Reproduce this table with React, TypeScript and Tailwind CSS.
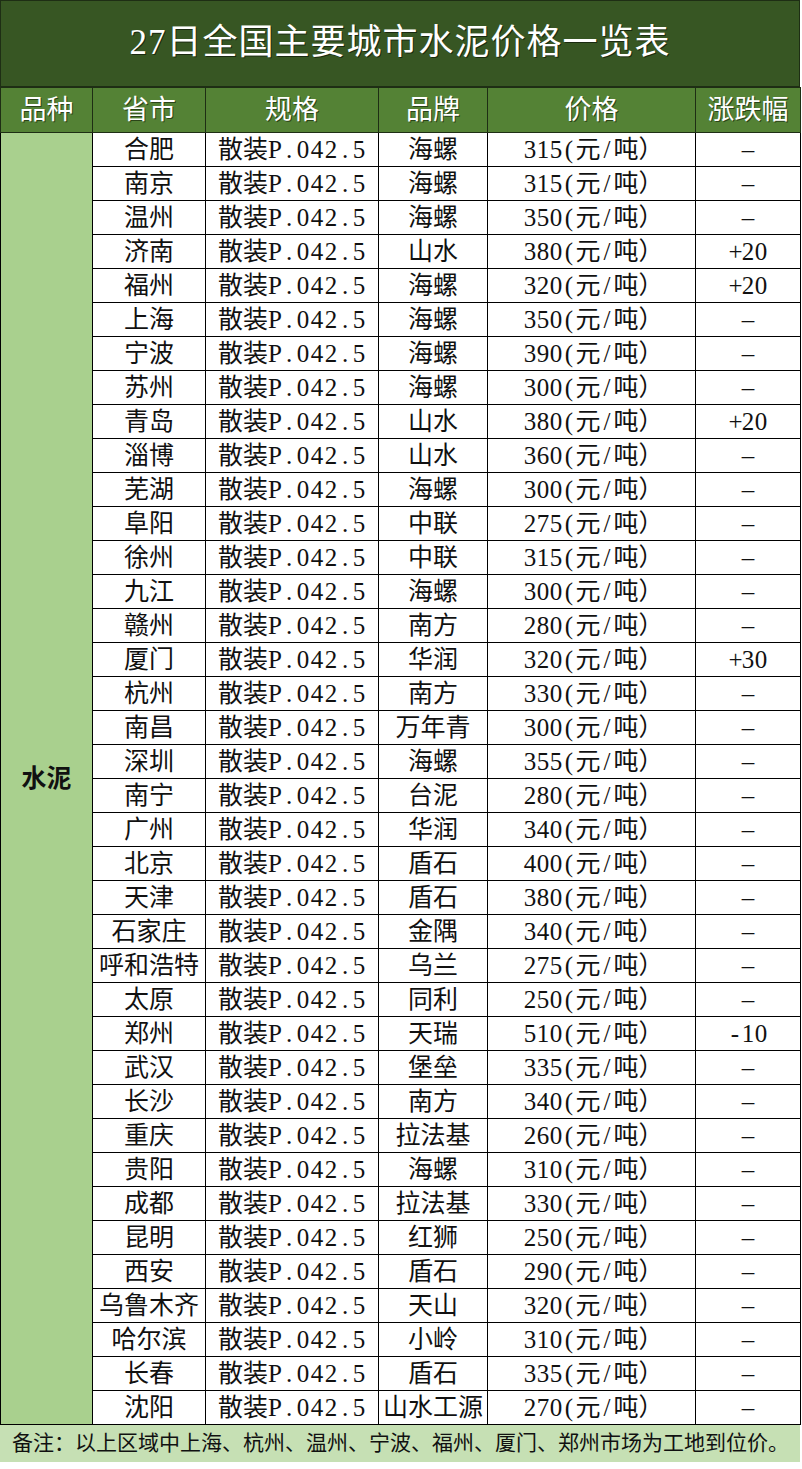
import React from "react";

const rows: [string, string, string, string][] = [
  ["合肥", "海螺", "315", "–"],
  ["南京", "海螺", "315", "–"],
  ["温州", "海螺", "350", "–"],
  ["济南", "山水", "380", "+20"],
  ["福州", "海螺", "320", "+20"],
  ["上海", "海螺", "350", "–"],
  ["宁波", "海螺", "390", "–"],
  ["苏州", "海螺", "300", "–"],
  ["青岛", "山水", "380", "+20"],
  ["淄博", "山水", "360", "–"],
  ["芜湖", "海螺", "300", "–"],
  ["阜阳", "中联", "275", "–"],
  ["徐州", "中联", "315", "–"],
  ["九江", "海螺", "300", "–"],
  ["赣州", "南方", "280", "–"],
  ["厦门", "华润", "320", "+30"],
  ["杭州", "南方", "330", "–"],
  ["南昌", "万年青", "300", "–"],
  ["深圳", "海螺", "355", "–"],
  ["南宁", "台泥", "280", "–"],
  ["广州", "华润", "340", "–"],
  ["北京", "盾石", "400", "–"],
  ["天津", "盾石", "380", "–"],
  ["石家庄", "金隅", "340", "–"],
  ["呼和浩特", "乌兰", "275", "–"],
  ["太原", "同利", "250", "–"],
  ["郑州", "天瑞", "510", "-10"],
  ["武汉", "堡垒", "335", "–"],
  ["长沙", "南方", "340", "–"],
  ["重庆", "拉法基", "260", "–"],
  ["贵阳", "海螺", "310", "–"],
  ["成都", "拉法基", "330", "–"],
  ["昆明", "红狮", "250", "–"],
  ["西安", "盾石", "290", "–"],
  ["乌鲁木齐", "天山", "320", "–"],
  ["哈尔滨", "小岭", "310", "–"],
  ["长春", "盾石", "335", "–"],
  ["沈阳", "山水工源", "270", "–"],
];

const font = "font-['Liberation_Serif','Noto_Sans_CJK_SC',serif]";

function Half({ text }: { text: string }) {
  return (
    <>
      {text.split("").map((c, i) => (
        <span key={i} className="inline-block w-[14px] text-center">
          {c}
        </span>
      ))}
    </>
  );
}

function HalfP({ text }: { text: string }) {
  return (
    <>
      {text.split("").map((c, i) => (
        <span key={i} className="inline-block w-[13px] text-center">
          {c}
        </span>
      ))}
    </>
  );
}

export default function App() {
  return (
    <div className={`w-[802px] bg-white ${font}`}>
      <div className="w-[800px]">
        <div className="h-[87px] bg-[#375623] border border-[#1e2e14] flex items-center justify-center text-white text-[35px] tracking-[1px] [text-shadow:1px_1px_0_#1a2a10]">
          27日全国主要城市水泥价格一览表
        </div>
        <table className="w-[800px] table-fixed border-collapse">
          <colgroup>
            <col className="w-[92px]" />
            <col className="w-[113px]" />
            <col className="w-[173px]" />
            <col className="w-[109px]" />
            <col className="w-[208px]" />
            <col className="w-[105px]" />
          </colgroup>
          <thead>
            <tr className="h-[45px] bg-[#548235] text-white text-[27px] [text-shadow:1px_1px_0_#2a4418]">
              {["品种", "省市", "规格", "品牌", "价格", "涨跌幅"].map((h) => (
                <th key={h} className="border border-[#1e2e14] font-normal text-center p-0 leading-none">
                  {h}
                </th>
              ))}
            </tr>
          </thead>
          <tbody className="text-[25px] text-[#111]">
            {rows.map((r, i) => (
              <tr key={i} className="h-[34px]">
                {i === 0 && (
                  <td
                    rowSpan={rows.length}
                    className="bg-[#a9d08e] border border-black text-center font-bold text-[25px] p-0"
                  >
                    水泥
                  </td>
                )}
                <td className="border border-black text-center p-0 leading-none whitespace-nowrap">{r[0]}</td>
                <td className="border border-black text-center p-0 leading-none whitespace-nowrap">
                  散装<Half text="P.042.5" />
                </td>
                <td className="border border-black text-center p-0 leading-none whitespace-nowrap">{r[1]}</td>
                <td className="border border-black text-center p-0 leading-none whitespace-nowrap pl-[4px]">
                  <HalfP text={r[2] + "("} />元<HalfP text="/" />吨）
                </td>
                <td className="border border-black text-center p-0 leading-none whitespace-nowrap">
                  <HalfP text={r[3]} />
                </td>
              </tr>
            ))}
          </tbody>
        </table>
        <div className="h-[37px] bg-[#c6e0b4] flex items-center pl-[12px] text-[21px] text-[#111] whitespace-nowrap">
          备注：以上区域中上海、杭州、温州、宁波、福州、厦门、郑州市场为工地到位价。
        </div>
      </div>
    </div>
  );
}
